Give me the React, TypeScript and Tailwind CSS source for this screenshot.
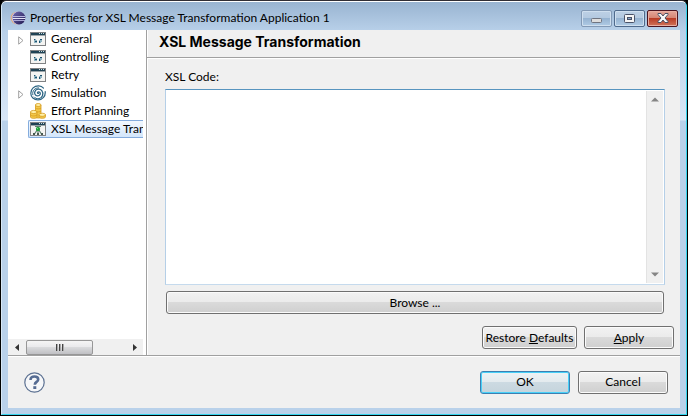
import type { ReactNode } from "react";

const buttonBase =
  "flex h-[23px] items-center justify-center rounded-[3px] border text-xs leading-4 text-black";
const greyButton =
  "border-[#707070] bg-[linear-gradient(#f2f2f2_0%,#ebebeb_48%,#dadada_50%,#cfcfcf_100%)] shadow-[inset_0_0_0_1px_#fbfbfb]";

function EclipseIcon() {
  return (
    <svg width="16" height="16" viewBox="0 0 16 16" className="shrink-0" aria-hidden="true">
      <defs>
        <linearGradient id="orb" x1="0" y1="0" x2="1" y2="1">
          <stop offset="0" stopColor="#7068b0" />
          <stop offset="1" stopColor="#1f1850" />
        </linearGradient>
      </defs>
      <circle cx="7" cy="8" r="6.3" fill="#e9a467" />
      <circle cx="8" cy="8" r="6.4" fill="#c9c6e8" />
      <circle cx="9" cy="8" r="6.4" fill="url(#orb)" />
      <path d="M3 6.500H15.200" stroke="#b9b8e0" strokeWidth="1" />
      <path d="M2.700 8.500H15.500" stroke="#e4e4f6" strokeWidth="1" />
      <path d="M3.200 10.500H15" stroke="#a9a8d4" strokeWidth="1" />
    </svg>
  );
}

function WindowFrame() {
  return (
    <g shapeRendering="crispEdges">
      <rect width="16" height="14" fill="#808284" />
      <rect x="1" y="4" width="14" height="9" fill="#f4f4f2" />
      <rect x="1" y="1" width="14" height="2" fill="#1f4254" />
      <rect x="1" y="3" width="14" height="1" fill="#9aa4a8" />
      <path d="M9 1h1v1H9zM11 1h1v1h-1zM13 1h1v1h-1z" fill="#c4dce2" />
    </g>
  );
}

function WindowIcon() {
  return (
    <svg width="16" height="14" viewBox="0 0 16 14" aria-hidden="true">
      <WindowFrame />
      <g shapeRendering="crispEdges">
        <path d="M4 7h2v1h1v3H4zM9 8h1V7h2v3h-1v1H9z" fill="#8fb4c2" />
        <path d="M4 7h1v1H4zM5 9h2v1H5zM10 7h2v1h-2zM9 9h1v2H9z" fill="#1e5270" />
      </g>
    </svg>
  );
}

function SwirlIcon() {
  return (
    <svg width="16" height="16" viewBox="0 0 16 16" fill="none" stroke="#2c6583" strokeLinecap="round" aria-hidden="true">
      <path
        d="M8.4 8.3C7.2 8.8 7 6.9 8.5 6.8c2-.1 2.6 2.7.6 3.7-2.4 1.2-5-.7-4.4-3.4.7-3.1 5-4.1 7.1-1.5 2.5 3.1.5 7.6-3.5 8.2"
        strokeWidth="1.3"
      />
      <path d="M15.2 6.6C15.7 11 12.6 15 8 15 4 15 .8 12 .8 8.2c0-4 3.4-7.6 7.9-7.4 2 .1 3.7 1 4.8 2.3" strokeWidth="1.2" />
      <path d="M2.8 9.8C1.9 5.6 5 2.7 8.6 2.9M4.2 12c1 1.2 2.3 1.7 3.7 1.8" strokeWidth="1" />
    </svg>
  );
}

function CoinsIcon() {
  return (
    <svg width="16" height="16" viewBox="0 0 16 16" stroke="#d59b1d" strokeWidth=".8" aria-hidden="true">
      <path d="M5.5 2v12c0 1.4 5.5 1.4 5.5 0V2z" fill="#f4c94b" />
      <ellipse cx="8.2" cy="2" rx="2.8" ry="1.5" fill="#fff0a5" />
      <path d="M5.5 5c0 1.2 5.5 1.2 5.5 0M5.5 8c0 1.2 5.5 1.2 5.5 0" fill="none" />
      <path d="M.5 9v5c0 1.8 6.5 1.8 6.5 0V9z" fill="#f4c94b" />
      <ellipse cx="3.7" cy="9" rx="3.2" ry="1.6" fill="#fff0a5" />
      <path d="M.5 11.7c0 1.7 6.5 1.7 6.5 0" fill="none" />
      <path d="M9 11.8v2c0 2 6.5 2 6.5 0v-2z" fill="#f4c94b" />
      <ellipse cx="12.2" cy="11.8" rx="3.2" ry="1.6" fill="#fff0a5" />
    </svg>
  );
}

function TransformIcon() {
  return (
    <svg width="16" height="14" viewBox="0 0 16 14" aria-hidden="true">
      <WindowFrame />
      <path d="M5 4.500h6M8 6v6M7.500 7.500L4.500 12M8.500 7.500l3 4.500" stroke="#5f7f70" strokeWidth="1.2" fill="none" />
      <rect x="6" y="5" width="4" height="4" rx="1.5" fill="#1fa03a" />
      <rect x="7" y="6" width="1" height="1" fill="#6fe07f" />
      <path d="M3 11h2v2H3zM7 11h2v2H7zM11 11h2v2h-2z" fill="#46584f" />
    </svg>
  );
}

const items: { label: string; icon: ReactNode; expandable?: boolean; selected?: boolean }[] = [
  { label: "General", icon: <WindowIcon />, expandable: true },
  { label: "Controlling", icon: <WindowIcon /> },
  { label: "Retry", icon: <WindowIcon /> },
  { label: "Simulation", icon: <SwirlIcon />, expandable: true },
  { label: "Effort Planning", icon: <CoinsIcon /> },
  { label: "XSL Message Transformation", icon: <TransformIcon />, selected: true },
];

function TitleBar() {
  const caption = "flex h-[17px] w-[31px] items-center justify-center rounded-[2px] border";
  const blue =
    "bg-[linear-gradient(#bdd0e5_0%,#b3c9e0_48%,#96b3d1_50%,#b0cbe5_100%)] shadow-[inset_0_0_0_1px_#cfdfef]";
  return (
    <header className="flex h-7 shrink-0 items-center gap-1 pt-1 pr-0.5 pl-0.5">
      <EclipseIcon />
      <h1 className="min-w-0 flex-1 truncate text-xs leading-4">
        Properties for XSL Message Transformation Application 1
      </h1>
      <div className="flex gap-0.5">
        <button aria-label="Minimize" className={`${caption} ${blue} border-[#8299b5]`}>
          <svg width="11" height="5" viewBox="0 0 11 5" className="mt-1">
            <rect x=".5" y=".5" width="10" height="4" rx="1" fill="#ddd" stroke="#6f7480" />
          </svg>
        </button>
        <button aria-label="Maximize" className={`${caption} ${blue} border-[#4f6a8c]`}>
          <svg width="11" height="9" viewBox="0 0 11 9">
            <rect x=".5" y=".5" width="10" height="8" rx="1" fill="#f5f5f5" stroke="#4a5268" />
            <rect x="3.5" y="3.5" width="4" height="2" fill="#87a6c8" stroke="#4a5268" />
          </svg>
        </button>
        <button
          aria-label="Close"
          className={`${caption} border-[#4b1420] bg-[linear-gradient(#e5a699_0%,#d58473_48%,#b93c26_50%,#d07459_100%)] shadow-[inset_0_0_0_1px_#e8aea2]`}
        >
          <svg width="12" height="10" viewBox="0 0 12 10">
            <path d="M1 .5h3L6 3 8 .5h3v1L8 5l3 3.5v1H8L6 7 4 9.5H1v-1L4 5 1 1.5z" fill="#f8f8f8" stroke="#4a5064" />
          </svg>
        </button>
      </div>
    </header>
  );
}

function Sidebar() {
  return (
    <nav aria-label="Property pages" className="flex w-[138px] shrink-0 flex-col bg-white pr-[3px]">
      <ul className="min-h-0 flex-1 overflow-hidden">
        {items.map((item) => (
          <li key={item.label} className="flex h-[18px] items-center pl-2">
            <span className="w-3 shrink-0 pl-0.5">
              {item.expandable && (
                <svg width="6" height="9" viewBox="0 0 6 9" className="mt-0.5 block" aria-hidden="true">
                  <path d="M.7 .8v7.4L5 4.5z" fill="#fff" stroke="#a0a0a0" />
                </svg>
              )}
            </span>
            <a
              href="#page"
              aria-current={item.selected ? "page" : undefined}
              className={`flex h-[18px] min-w-0 flex-1 items-center gap-[5px] overflow-hidden rounded-l-[2px] border border-r-0 pl-px text-xs leading-4 whitespace-nowrap ${
                item.selected
                  ? "border-[#84acdd] bg-[linear-gradient(#f2f8fe,#d3e6fb)]"
                  : "border-transparent"
              }`}
            >
              <span className="flex h-4 w-4 shrink-0 items-center">{item.icon}</span>
              <span>{item.label}</span>
            </a>
          </li>
        ))}
      </ul>
      <div className="flex h-4 shrink-0 items-center bg-[#f0f0f0]">
        <button aria-label="Scroll left" className="flex w-[18px] justify-center">
          <svg width="4" height="7" viewBox="0 0 4 7">
            <path d="M4 0v7L0 3.5z" fill="#333" />
          </svg>
        </button>
        <div className="flex h-[15px] w-[67px] items-center justify-center rounded-[2px] border border-[#979797] bg-[linear-gradient(#f5f5f5_0%,#e9e9eb_48%,#d9dadc_50%,#c0c0c4_100%)]">
          <svg width="8" height="7" viewBox="0 0 8 7" shapeRendering="crispEdges" aria-hidden="true">
            <path d="M0 0h2v7H0zM3 0h2v7H3zM6 0h2v7H6z" fill="#aaa" />
            <path d="M0 0h1v7H0zM3 0h1v7H3zM6 0h1v7H6z" fill="#444" />
          </svg>
        </div>
        <button aria-label="Scroll right" className="ml-auto flex w-[17px] justify-center">
          <svg width="4" height="7" viewBox="0 0 4 7">
            <path d="M0 0v7l4-3.5z" fill="#333" />
          </svg>
        </button>
      </div>
    </nav>
  );
}

export default function App() {
  return (
    <div className="h-screen bg-black font-[Lato,'Open_Sans',sans-serif] text-xs text-black">
      <div className="flex h-full flex-col overflow-hidden rounded-t-[6px] border border-t-[#302d34] border-r-black border-b-black border-l-black">
        <div className="flex min-h-0 flex-1 flex-col rounded-t-[5px] border border-t-white border-r-[#35d5ee] border-b-[#35d5ee] border-l-[#d8e8f6] bg-[#b9d1ea] bg-[linear-gradient(#99b4d1_0px,#b9d1ea_30px,#c5d9ee_60px,#d8e6f6_118px,#b9d1ea_119px)] px-1.5 pb-1.5">
          <TitleBar />
          <main className="flex min-h-0 flex-1 flex-col bg-[#f0f0f0]">
            <div className="flex min-h-0 flex-1">
              <Sidebar />
              <section className="flex min-w-0 flex-1 flex-col border-l border-[#a0a0a0] shadow-[inset_1px_0_0_#fff]">
                <div className="h-7 shrink-0 border-b border-[#a0a0a0] pt-1 pl-3 shadow-[0_1px_0_#fff]">
                  <h2 className="font-[Inter,'Liberation_Sans',sans-serif] text-sm leading-4 font-bold">
                    XSL Message Transformation
                  </h2>
                </div>
                <div className="flex min-h-0 flex-1 flex-col pt-[11px] pr-1.5 pb-1.5 pl-[18px]">
                  <label htmlFor="xsl-code" className="mb-1 leading-4">
                    XSL Code:
                  </label>
                  <div className="mr-[9px] flex min-h-0 flex-1 border border-t-[#5794bf] border-r-[#b5cfe7] border-b-[#c5daed] border-l-[#b5cfe7] bg-white p-px">
                    <textarea
                      id="xsl-code"
                      className="min-w-0 flex-1 resize-none overflow-hidden p-1 outline-none"
                    />
                    <div className="flex w-[17px] shrink-0 flex-col items-center justify-between border-l border-[#e3e3e3] bg-[#f0f0f0] py-1.5">
                      <button aria-label="Scroll up">
                        <svg width="8" height="5" viewBox="0 0 8 5" className="block">
                          <path d="M0 4.5L4 .5l4 4z" fill="#858585" />
                        </svg>
                      </button>
                      <button aria-label="Scroll down">
                        <svg width="8" height="5" viewBox="0 0 8 5" className="block">
                          <path d="M0 .5h8l-4 4z" fill="#858585" />
                        </svg>
                      </button>
                    </div>
                  </div>
                  <button className={`mt-1.5 mr-2.5 ml-px shrink-0 ${buttonBase} ${greyButton}`}>Browse ...</button>
                  <div className="mt-3 flex justify-end gap-[7px]">
                    <button className={`w-[95px] ${buttonBase} ${greyButton}`}>
                      <span>
                        Restore <u>D</u>efaults
                      </span>
                    </button>
                    <button className={`w-[90px] ${buttonBase} ${greyButton}`}>
                      <span>
                        <u>A</u>pply
                      </span>
                    </button>
                  </div>
                </div>
              </section>
            </div>
            <footer className="flex h-[53px] shrink-0 items-center gap-2 border-t border-[#a0a0a0] pr-3 pl-4 shadow-[inset_0_1px_0_#fff]">
              <button aria-label="Help" className="mr-auto">
                <svg width="21" height="21" viewBox="0 0 21 21" fill="none" className="block">
                  <circle cx="10.5" cy="10.5" r="9.7" fill="#f6f7f9" stroke="#5c7192" strokeWidth="1.2" />
                  <path
                    d="M6.500 8C6.500 5.300 8.200 4.500 10.500 4.500c2.200 0 3.700 1.100 3.700 2.900 0 2.500-3.400 2.500-3.400 5.300"
                    stroke="#566c93"
                    strokeWidth="2.600"
                  />
                  <rect x="9.300" y="14.200" width="3" height="2.800" fill="#566c93" />
                </svg>
              </button>
              <button
                className={`w-[90px] ${buttonBase} border-[#3c7fb1] bg-[linear-gradient(#eef2f4_0%,#e3eaee_48%,#ccdae2_50%,#c5d4dc_100%)] shadow-[inset_0_0_0_1px_#48d0f8]`}
              >
                OK
              </button>
              <button className={`w-[90px] ${buttonBase} ${greyButton}`}>Cancel</button>
            </footer>
          </main>
        </div>
      </div>
    </div>
  );
}
